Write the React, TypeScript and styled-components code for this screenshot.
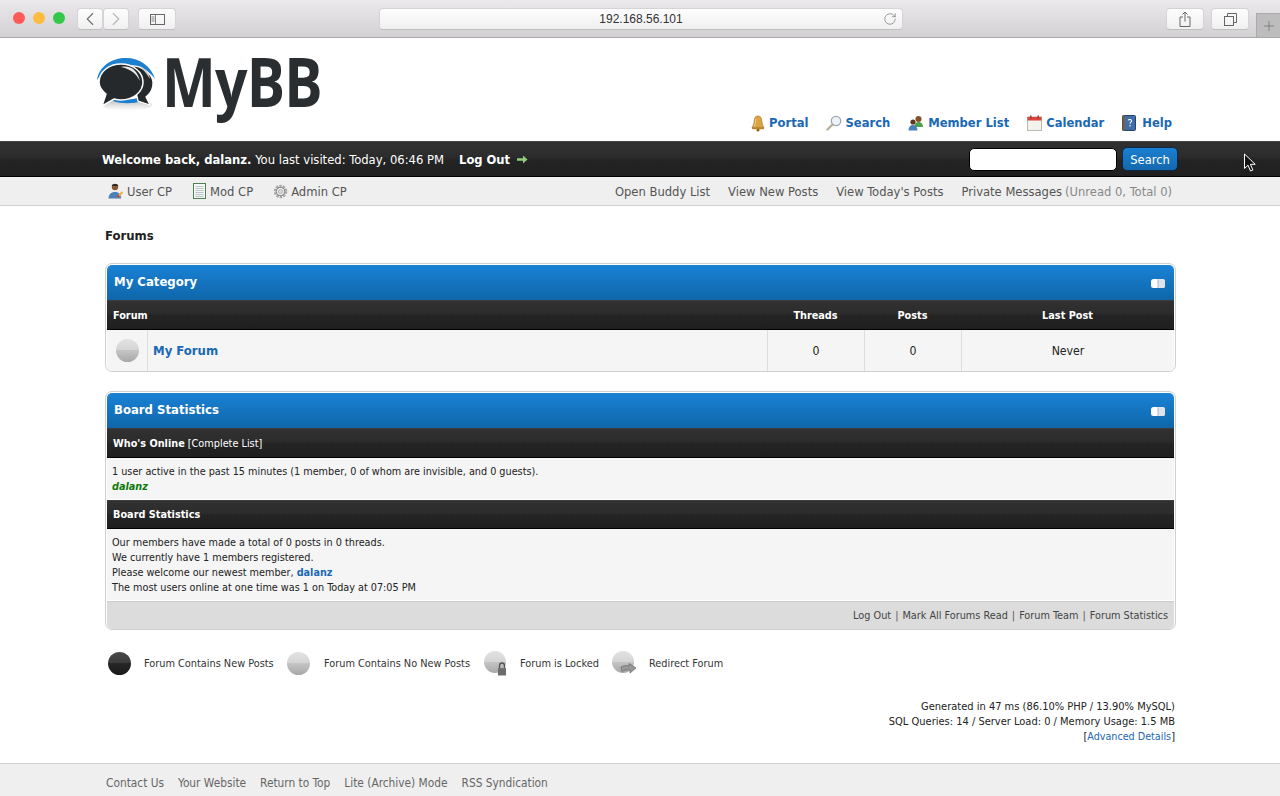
import React from "react";
import styled, { createGlobalStyle, css } from "styled-components";
import { ChevronLeft, ChevronRight, RotateCw, Plus } from "lucide-react";

const GlobalStyle = createGlobalStyle`
  html, body {
    margin: 0;
    padding: 0;
    background: #fff;
  }
  body {
    font-family: "DejaVu Sans", Tahoma, Verdana, sans-serif;
    font-stretch: condensed;
    font-size: 12px;
    color: #333;
    height: 796px;
    overflow: hidden;
  }
  a {
    color: #0f5c8e;
    text-decoration: none;
  }
`;

const darkBar = css`
  background:
    linear-gradient(90deg, rgba(0, 0, 0, 0.12) 50%, transparent 50%) center / 3px 4px repeat-x,
    linear-gradient(to bottom, #313131 0%, #2c2c2c 45%, #242424 55%, #1f1f1f 100%);
`;

const Page = styled.div`
  position: relative;
  width: 1280px;
  height: 796px;
  display: flex;
  flex-direction: column;
`;

/* browser chrome */
const Chrome = styled.div`
  height: 38px;
  box-sizing: border-box;
  flex: none;
  background: linear-gradient(to bottom, #ebe9eb, #d2d0d2);
  border-bottom: 1px solid #a8a8a8;
  display: flex;
  align-items: flex-start;
  padding: 8px 0 0 13px;
`;

const Lights = styled.div`
  display: flex;
  gap: 8px;
  margin: 4px 12px 0 0;
`;

const Light = styled.span<{ $color: string }>`
  width: 12px;
  height: 12px;
  border-radius: 50%;
  background: ${({ $color }) => $color};
`;

const ChromeButton = styled.div<{ $width: number; $gap?: number }>`
  width: ${({ $width }) => $width}px;
  height: 22px;
  box-sizing: border-box;
  margin-right: ${({ $gap }) => $gap ?? 0}px;
  background: linear-gradient(to bottom, #fdfdfd, #f0f0f0);
  border: 1px solid #d5d3d5;
  border-bottom-color: #bfbdbf;
  border-radius: 4px;
  display: flex;
  align-items: center;
  justify-content: center;
  color: #6f6f6f;
  flex: none;
`;

const AddressBar = styled(ChromeButton)`
  position: relative;
  color: #333;
  font-family: "Liberation Sans", sans-serif;
  font-stretch: normal;
  font-size: 12px;
`;

const Reload = styled.span`
  position: absolute;
  right: 5px;
  top: 3px;
  color: #777;
  display: flex;
`;

const NewTab = styled.div`
  width: 24px;
  height: 24px;
  margin-top: 5px;
  flex: none;
  background: #bdbdbd;
  border-left: 1px solid #aaa;
  border-top: 1px solid #aaa;
  box-sizing: border-box;
  color: #666;
  display: flex;
  align-items: center;
  justify-content: center;
`;

/* board header */
const Header = styled.div`
  height: 103px;
  flex: none;
  box-sizing: border-box;
  padding: 0 108px 0 97px;
  display: flex;
  align-items: flex-start;
  justify-content: space-between;
`;

const Logo = styled.div`
  display: flex;
  align-items: flex-start;
  padding-top: 20px;
`;

const LogoText = styled.span`
  display: inline-block;
  font-family: "Open Sans", sans-serif;
  font-stretch: normal;
  font-weight: 700;
  font-size: 68px;
  line-height: 70px;
  color: #2b2e30;
  letter-spacing: -1px;
  transform: scaleX(0.84);
  transform-origin: left top;
  margin: -12px 0 0 6px;
  width: 160px;
`;

const TopNav = styled.div`
  display: flex;
  gap: 18px;
  padding-top: 75px;
`;

const TopLink = styled.a`
  display: flex;
  align-items: center;
  font-size: 12.85px;
  font-weight: 700;
  color: #1a68b4;
  line-height: 20px;
`;

const IconSlot = styled.span<{ $width?: number }>`
  width: ${({ $width }) => $width ?? 19}px;
  flex: none;
  display: flex;
  align-items: center;
`;

const Bar = styled.div`
  height: 36px;
  flex: none;
  box-sizing: border-box;
  ${darkBar};
  border-top: 1px solid #444;
  border-bottom: 1px solid #000;
  padding: 0 102px;
  display: flex;
  align-items: center;
  color: #fff;
`;

const Welcome = styled.span`
  font-size: 12.9px;
  color: #fff;
`;

const LogOut = styled.a`
  display: inline-flex;
  align-items: center;
  gap: 7px;
  margin-left: 15px;
  color: #fff;
  font-weight: 700;
  font-size: 12.8px;
`;

const SearchForm = styled.form`
  display: flex;
  gap: 5px;
  margin-left: auto;
  align-items: center;
`;

const SearchInput = styled.input`
  width: 148px;
  height: 23px;
  box-sizing: border-box;
  border: 1px solid #000;
  border-radius: 5px;
  background: #fff;
  padding: 0;
`;

const SearchButton = styled.button`
  width: 56px;
  height: 24px;
  box-sizing: border-box;
  border: 1px solid #0a2a4a;
  border-radius: 5px;
  background: linear-gradient(to bottom, #1a7fd1, #1468ae);
  color: #fff;
  font: inherit;
  font-size: 12.8px;
  padding: 0;
`;

const Panel = styled.div`
  height: 29px;
  flex: none;
  box-sizing: border-box;
  background: #efefef;
  border-bottom: 1px solid #d1d1d1;
  padding: 0 108px;
  display: flex;
  align-items: center;
  justify-content: space-between;
  font-size: 12.85px;
`;

const PanelGroup = styled.div<{ $gap: number }>`
  display: flex;
  gap: ${({ $gap }) => $gap}px;
  align-items: center;
`;

const PanelLink = styled.a`
  display: flex;
  align-items: center;
  gap: 3px;
  color: #555;
`;

const Muted = styled.span`
  color: #888;
`;

/* content */
const Content = styled.div`
  flex: 1;
  width: 1071px;
  box-sizing: border-box;
  margin-left: 105px;
`;

const Crumb = styled.div`
  font-size: 13px;
  font-weight: 700;
  color: #222;
  line-height: 16px;
  padding-top: 22px;
  margin-bottom: 19px;
`;

const Block = styled.div`
  border: 1px solid #cfcfcf;
  border-radius: 7px;
  padding: 1px 1px 0;
  margin-bottom: 19px;
  background: #fff;
  box-sizing: border-box;
`;

const BlockHead = styled.div`
  height: 35px;
  box-sizing: border-box;
  border-radius: 5px 5px 0 0;
  background: linear-gradient(to bottom, #1a82d6, #0f66a9);
  padding: 0 9px 2px 7px;
  display: flex;
  align-items: center;
  justify-content: space-between;
  color: #fff;
  font-weight: 700;
  font-size: 13px;
`;

const ForumGrid = css`
  display: grid;
  grid-template-columns: 40px 1fr 97px 97px 213px;
`;

const TableHead = styled.div`
  ${ForumGrid};
  ${darkBar};
  height: 30px;
  box-sizing: border-box;
  border-top: 1px solid #3c3c3c;
  border-bottom: 1px solid #000;
  color: #fff;
  font-weight: 700;
  font-size: 10.8px;
  align-items: center;
`;

const HeadCell = styled.div<{ $wide?: boolean }>`
  text-align: center;
  ${({ $wide }) =>
    $wide &&
    css`
      grid-column: 1 / span 2;
      text-align: left;
      padding-left: 6px;
    `}
`;

const ForumRow = styled.div`
  ${ForumGrid};
  height: 41px;
  box-sizing: border-box;
  background: #f5f5f5;
  border-radius: 0 0 5px 5px;
  color: #222;
  font-size: 12.2px;
`;

const Cell = styled.div<{ $first?: boolean }>`
  display: flex;
  align-items: center;
  justify-content: center;
  border-left: ${({ $first }) => ($first ? "none" : "1px solid #ddd")};
`;

const NameCell = styled(Cell)`
  justify-content: flex-start;
  padding-left: 5px;
`;

const ForumName = styled.a`
  color: #1a68b4;
  font-weight: 700;
  font-size: 13px;
`;

const StatHead = styled.div<{ $height: number }>`
  ${darkBar};
  height: ${({ $height }) => $height}px;
  box-sizing: border-box;
  border-top: 1px solid #3c3c3c;
  border-bottom: 1px solid #000;
  padding: 0 6px;
  display: flex;
  align-items: center;
  gap: 3px;
  color: #fff;
  font-size: 10.8px;
  b {
    font-weight: 700;
  }
`;

const StatBody = styled.div<{ $height: number }>`
  height: ${({ $height }) => $height}px;
  box-sizing: border-box;
  background: #f5f5f5;
  padding: 6px 5px 0;
  font-size: 10.75px;
  line-height: 15px;
  color: #222;
  border-bottom: 1px solid #fff;
  a {
    color: #1a68b4;
    font-weight: 700;
  }
`;

const Online = styled.a`
  && {
    color: #0a7a0a;
    font-style: italic;
    font-weight: 700;
  }
`;

const StatFoot = styled.div`
  height: 28px;
  box-sizing: border-box;
  background: #dcdcdc;
  border-radius: 0 0 5px 5px;
  border-top: 1px solid #ccc;
  padding: 0 6px;
  display: flex;
  align-items: center;
  justify-content: flex-end;
  gap: 4px;
  font-size: 10.8px;
  color: #555;
  a {
    color: #444;
  }
`;

const Legend = styled.div`
  display: flex;
  align-items: center;
  height: 28px;
  padding-left: 3px;
  font-size: 10.85px;
  color: #333;
`;

const LegendItem = styled.div<{ $width: number }>`
  width: ${({ $width }) => $width}px;
  flex: none;
  display: flex;
  align-items: center;
`;

const Debug = styled.div`
  margin-top: 22px;
  padding-right: 1px;
  text-align: right;
  font-size: 11px;
  line-height: 15px;
  color: #222;
  a {
    color: #1a68b4;
    font-size: 10.7px;
  }
`;

const Footer = styled.div`
  height: 33px;
  flex: none;
  box-sizing: border-box;
  background: #efefef;
  border-top: 1px solid #d1d1d1;
  padding: 6px 0 0 106px;
  display: flex;
  align-items: center;
  gap: 14px;
  font-size: 11.8px;
  a {
    color: #666;
  }
`;

const Cursor = styled.svg`
  position: absolute;
  left: 1243px;
  top: 153px;
`;

/* drawings */
const BallStops: React.FC<{ dark?: boolean }> = ({ dark }) => (
  <>
    <stop offset="0" stopColor={dark ? "#4a4a4a" : "#e2e2e2"} />
    <stop offset="0.5" stopColor={dark ? "#3a3a3a" : "#d4d4d4"} />
    <stop offset="0.5" stopColor={dark ? "#262626" : "#c4c4c4"} />
    <stop offset="1" stopColor={dark ? "#1b1b1b" : "#a8a8a8"} />
  </>
);

const ForumIcon: React.FC<{ dark?: boolean; size?: number; id: string }> = ({ dark, size = 23, id }) => (
  <svg width={size} height={size} viewBox="0 0 22 22" style={{ flex: "none" }}>
    <defs>
      <linearGradient id={id} x1="0" y1="0" x2="0" y2="1">
        <BallStops dark={dark} />
      </linearGradient>
    </defs>
    <circle cx="11" cy="11" r="11" fill={`url(#${id})`} />
  </svg>
);

const Collapse = () => (
  <svg width="14" height="9" viewBox="0 0 14 9" style={{ marginTop: 3 }}>
    <rect width="14" height="9" rx="2.5" fill="#fff" />
    <rect x="7" width="7" height="9" rx="2.5" fill="#dfe4ea" />
    <rect x="6.6" width="0.8" height="9" fill="#8fa8c0" />
  </svg>
);

const BellIcon = () => (
  <svg width="16" height="17" viewBox="0 0 16 17">
    <path d="M8 1c-2.600 0-3.600 2-3.800 4.500C4 8.500 3.500 10.500 2 12.500h12c-1.500-2-2-4-2.200-7C11.600 3 10.600 1 8 1z" fill="#d9a441" stroke="#a97820" strokeWidth=".7" />
    <path d="M6 4c-.6 2-.6 5-1.500 7.500" stroke="#f2d79a" strokeWidth="1" fill="none" />
    <rect x="2" y="12.500" width="12" height="1.800" rx=".8" fill="#b9862f" />
    <circle cx="8" cy="15.200" r="1.400" fill="#8e6518" />
  </svg>
);

const GlassIcon = () => (
  <svg width="16" height="16" viewBox="0 0 16 16">
    <circle cx="10" cy="6" r="4.700" fill="#eef3f8" stroke="#9aa6b0" strokeWidth="1.300" />
    <path d="M6.500 9.500L1.500 14.500" stroke="#b8b0a0" strokeWidth="2.400" strokeLinecap="round" />
  </svg>
);

const MembersIcon = () => (
  <svg width="17" height="16" viewBox="0 0 17 16">
    <circle cx="10.500" cy="4" r="3" fill="#8a4f28" />
    <path d="M6.500 12c0-3.500 1.500-5 4-5s4.500 1.500 4.500 5z" fill="#4ea24e" />
    <circle cx="5" cy="7" r="2.600" fill="#5a3a22" />
    <path d="M.5 15.500c0-3.500 1.800-5.500 4.500-5.500s4.500 2 4.500 5.500z" fill="#4d7fb8" />
  </svg>
);

const CalendarIcon = () => (
  <svg width="15" height="16" viewBox="0 0 15 16">
    <rect x=".5" y="2" width="14" height="13.500" fill="#f3f3ee" stroke="#b9b9b0" />
    <rect x=".5" y="2" width="14" height="3.500" fill="#d9453c" />
    <rect x="3" y=".5" width="1.500" height="3" fill="#a33" />
    <rect x="10.500" y=".5" width="1.500" height="3" fill="#a33" />
  </svg>
);

const HelpIcon = () => (
  <svg width="14" height="16" viewBox="0 0 14 16">
    <rect x=".5" y=".5" width="13" height="15" rx="1" fill="#3f6ea8" stroke="#2a4468" />
    <rect x=".5" y=".5" width="2.500" height="15" fill="#7a5f3c" />
    <path d="M6.200 5.500c.2-1.400 3.400-1.400 3.400.4 0 1.200-1.600 1.300-1.600 2.800M8 10v1.400" stroke="#fff" strokeWidth="1.100" fill="none" />
  </svg>
);

const UserIcon = () => (
  <svg width="16" height="16" viewBox="0 0 15 16">
    <circle cx="6.500" cy="4" r="3.200" fill="#8b5a34" />
    <path d="M3.200 3c.5-2.400 5.800-2.800 6.600 0z" fill="#2a2a2a" />
    <path d="M0 15.500c0-4 2.500-6.500 6.500-6.500s6 2.500 6 6.500z" fill="#4d7fb8" />
    <path d="M9 14l5-5" stroke="#e3b23c" strokeWidth="2" />
    <path d="M9 14l1.500-1.500" stroke="#c33" strokeWidth="2" />
  </svg>
);

const NotebookIcon = () => (
  <svg width="15" height="16" viewBox="0 0 15 16">
    <rect x="1.500" y=".5" width="12" height="15" fill="#f6f8f4" stroke="#4f7f55" />
    <path d="M3.500 3.500h8M3.500 5.500h8M3.500 7.500h8M3.500 9.500h8M3.500 11.500h8M3.500 13.500h8" stroke="#a8b4c0" strokeWidth=".8" />
  </svg>
);

const GearIcon = () => (
  <svg width="15" height="15" viewBox="0 0 14 14">
    <circle cx="7" cy="7" r="4.800" fill="none" stroke="#a8a8a8" strokeWidth="3" strokeDasharray="2 1" />
    <circle cx="7" cy="7" r="4" fill="none" stroke="#8d8d8d" strokeWidth="1" />
    <circle cx="7" cy="7" r="1.900" fill="#d8d8d8" stroke="#999" strokeWidth=".6" />
  </svg>
);

const GreenArrow = () => (
  <svg width="11" height="9" viewBox="0 0 11 9">
    <path d="M0 3.200h6V.5l4.500 4-4.500 4V5.800H0z" fill="#8fcf7e" />
  </svg>
);

const LockIcon = () => (
  <svg width="26" height="26" viewBox="0 0 26 26" style={{ flex: "none" }}>
    <defs>
      <linearGradient id="lockBall" x1="0" y1="0" x2="0" y2="1">
        <BallStops />
      </linearGradient>
    </defs>
    <circle cx="11" cy="12" r="11" fill="url(#lockBall)" />
    <path d="M15.500 18v-2.500a2.500 2.500 0 015 0V18" fill="none" stroke="#555" strokeWidth="1.300" />
    <rect x="14" y="18" width="8" height="7.500" fill="#777" />
    <path d="M14 20h8M14 22h8M14 24h8" stroke="#555" strokeWidth=".6" />
  </svg>
);

const RedirectIcon = () => (
  <svg width="26" height="26" viewBox="0 0 26 26" style={{ flex: "none" }}>
    <defs>
      <linearGradient id="redirBall" x1="0" y1="0" x2="0" y2="1">
        <BallStops />
      </linearGradient>
    </defs>
    <circle cx="11" cy="12" r="11" fill="url(#redirBall)" />
    <path d="M9 17c3-1.500 5-1.500 8-1v-2.500l7 4.500-6 5v-3c-3-.5-6 0-8 1.500z" fill="#999" stroke="#666" strokeWidth=".7" />
  </svg>
);

const LogoMark = () => (
  <svg width="59" height="54" viewBox="0 0 59 54" style={{ flex: "none" }}>
    <defs>
      <linearGradient id="logoShade" x1="0" y1="0" x2="0" y2="1">
        <stop offset="0" stopColor="#aaa" stopOpacity=".9" />
        <stop offset="1" stopColor="#ccc" stopOpacity="0" />
      </linearGradient>
    </defs>
    <ellipse cx="30" cy="47" rx="25" ry="6" fill="url(#logoShade)" />
    <path d="M0 22C2 8 15 0 29 0c14 0 25 8 29 21-6-9-17-13-29-13S6 13 0 22z" fill="#1d7fce" />
    <path d="M18 39c6 3.500 17 3.500 24 0l2 4c-7 3-20 3-28 0z" fill="#1d7fce" />
    <path d="M33 8c11-1 22 7 23 16 .5 7-3 12-7 15l4 8-12-4z" fill="#26292b" stroke="#fff" strokeWidth="1.300" />
    <path d="M24 6c12 0 22 8 22 18s-10 18-22 18c-3 0-5-.5-7-1L5 48l4-12C4 32 2 29 2 24 2 14 12 6 24 6z" fill="#26292b" stroke="#fff" strokeWidth="1.500" />
    <path d="M24 9c10-2 16 3 19 14-4-8-10-12-19-14z" fill="#e8e8e8" />
    <path d="M42 8c6 2 10 6 11 13-3-5-6-9-11-13z" fill="#cfcfcf" />
  </svg>
);

const App: React.FC = () => (
  <Page>
    <GlobalStyle />
    <Chrome>
      <Lights>
        <Light $color="#fc5b57" />
        <Light $color="#fdbc40" />
        <Light $color="#34c84a" />
      </Lights>
      <ChromeButton $width={26}>
        <ChevronLeft size={22} strokeWidth={1.2} />
      </ChromeButton>
      <ChromeButton $width={26} $gap={9}>
        <ChevronRight size={22} strokeWidth={1.2} color="#b5b5b5" />
      </ChromeButton>
      <ChromeButton $width={38} $gap={203}>
        <svg width="15" height="11" viewBox="0 0 15 11">
          <rect x=".5" y=".5" width="14" height="10" fill="none" stroke="#666" />
          <path d="M5.500 .5v10M1.500 3h3M1.500 5h3M1.500 7h3" stroke="#666" strokeWidth=".8" />
        </svg>
      </ChromeButton>
      <AddressBar $width={524} $gap={263}>
        192.168.56.101
        <Reload>
          <RotateCw size={14} strokeWidth={1.2} />
        </Reload>
      </AddressBar>
      <ChromeButton $width={38} $gap={7}>
        <svg width="12" height="16" viewBox="0 0 12 16">
          <path d="M1 6h3M8 6h3v9.500H1V6M6 10.500V1M3.500 3.500L6 1l2.500 2.500" fill="none" stroke="#666" />
        </svg>
      </ChromeButton>
      <ChromeButton $width={38} $gap={7}>
        <svg width="13" height="13" viewBox="0 0 13 13">
          <rect x=".5" y="3.500" width="9" height="9" fill="none" stroke="#666" />
          <path d="M3.500 3.500V.5h9v9h-3" fill="none" stroke="#666" />
        </svg>
      </ChromeButton>
      <NewTab>
        <Plus size={16} strokeWidth={1} />
      </NewTab>
    </Chrome>

    <Header>
      <Logo>
        <LogoMark />
        <LogoText>MyBB</LogoText>
      </Logo>
      <TopNav>
        <TopLink href="#"><IconSlot><BellIcon /></IconSlot>Portal</TopLink>
        <TopLink href="#"><IconSlot><GlassIcon /></IconSlot>Search</TopLink>
        <TopLink href="#"><IconSlot $width={20}><MembersIcon /></IconSlot>Member List</TopLink>
        <TopLink href="#"><IconSlot><CalendarIcon /></IconSlot>Calendar</TopLink>
        <TopLink href="#"><IconSlot $width={20}><HelpIcon /></IconSlot>Help</TopLink>
      </TopNav>
    </Header>

    <Bar>
      <Welcome>
        <b>Welcome back, dalanz.</b> You last visited: Today, 06:46 PM
      </Welcome>
      <LogOut href="#">Log Out <GreenArrow /></LogOut>
      <SearchForm>
        <SearchInput />
        <SearchButton type="button">Search</SearchButton>
      </SearchForm>
    </Bar>

    <Panel>
      <PanelGroup $gap={20}>
        <PanelLink href="#"><UserIcon />User CP</PanelLink>
        <PanelLink href="#"><NotebookIcon />Mod CP</PanelLink>
        <PanelLink href="#"><GearIcon />Admin CP</PanelLink>
      </PanelGroup>
      <PanelGroup $gap={18}>
        <PanelLink href="#">Open Buddy List</PanelLink>
        <PanelLink href="#">View New Posts</PanelLink>
        <PanelLink href="#">View Today's Posts</PanelLink>
        <PanelLink href="#">Private Messages <Muted>(Unread 0, Total 0)</Muted></PanelLink>
      </PanelGroup>
    </Panel>

    <Content>
      <Crumb>Forums</Crumb>

      <Block>
        <BlockHead>
          My Category
          <Collapse />
        </BlockHead>
        <TableHead>
          <HeadCell $wide>Forum</HeadCell>
          <HeadCell>Threads</HeadCell>
          <HeadCell>Posts</HeadCell>
          <HeadCell>Last Post</HeadCell>
        </TableHead>
        <ForumRow>
          <Cell $first><ForumIcon id="rowBall" /></Cell>
          <NameCell><ForumName href="#">My Forum</ForumName></NameCell>
          <Cell>0</Cell>
          <Cell>0</Cell>
          <Cell>Never</Cell>
        </ForumRow>
      </Block>

      <Block>
        <BlockHead>
          Board Statistics
          <Collapse />
        </BlockHead>
        <StatHead $height={30}><b>Who's Online</b> [Complete List]</StatHead>
        <StatBody $height={42}>
          1 user active in the past 15 minutes (1 member, 0 of whom are invisible, and 0 guests).
          <br />
          <Online href="#">dalanz</Online>
        </StatBody>
        <StatHead $height={29}><b>Board Statistics</b></StatHead>
        <StatBody $height={72}>
          Our members have made a total of 0 posts in 0 threads.
          <br />
          We currently have 1 members registered.
          <br />
          Please welcome our newest member, <a href="#">dalanz</a>
          <br />
          The most users online at one time was 1 on Today at 07:05 PM
        </StatBody>
        <StatFoot>
          <a href="#">Log Out</a> | <a href="#">Mark All Forums Read</a> | <a href="#">Forum Team</a> | <a href="#">Forum Statistics</a>
        </StatFoot>
      </Block>

      <Legend>
        <LegendItem $width={179}><IconSlot $width={36}><ForumIcon dark id="newBall" /></IconSlot>Forum Contains New Posts</LegendItem>
        <LegendItem $width={197}><IconSlot $width={37}><ForumIcon id="oldBall" /></IconSlot>Forum Contains No New Posts</LegendItem>
        <LegendItem $width={128}><IconSlot $width={36}><LockIcon /></IconSlot>Forum is Locked</LegendItem>
        <LegendItem $width={130}><IconSlot $width={37}><RedirectIcon /></IconSlot>Redirect Forum</LegendItem>
      </Legend>

      <Debug>
        Generated in 47 ms (86.10% PHP / 13.90% MySQL)
        <br />
        SQL Queries: 14 / Server Load: 0 / Memory Usage: 1.5 MB
        <br />
        [<a href="#">Advanced Details</a>]
      </Debug>
    </Content>

    <Footer>
      <a href="#">Contact Us</a>
      <a href="#">Your Website</a>
      <a href="#">Return to Top</a>
      <a href="#">Lite (Archive) Mode</a>
      <a href="#">RSS Syndication</a>
    </Footer>

    <Cursor width="13" height="20" viewBox="0 0 13 20">
      <path d="M1.500 1v14.500l3.500-3.300 2.500 5.800 2.400-1-2.500-5.700h4.800z" fill="#111" stroke="#fff" strokeWidth="1" />
    </Cursor>
  </Page>
);

export default App;
